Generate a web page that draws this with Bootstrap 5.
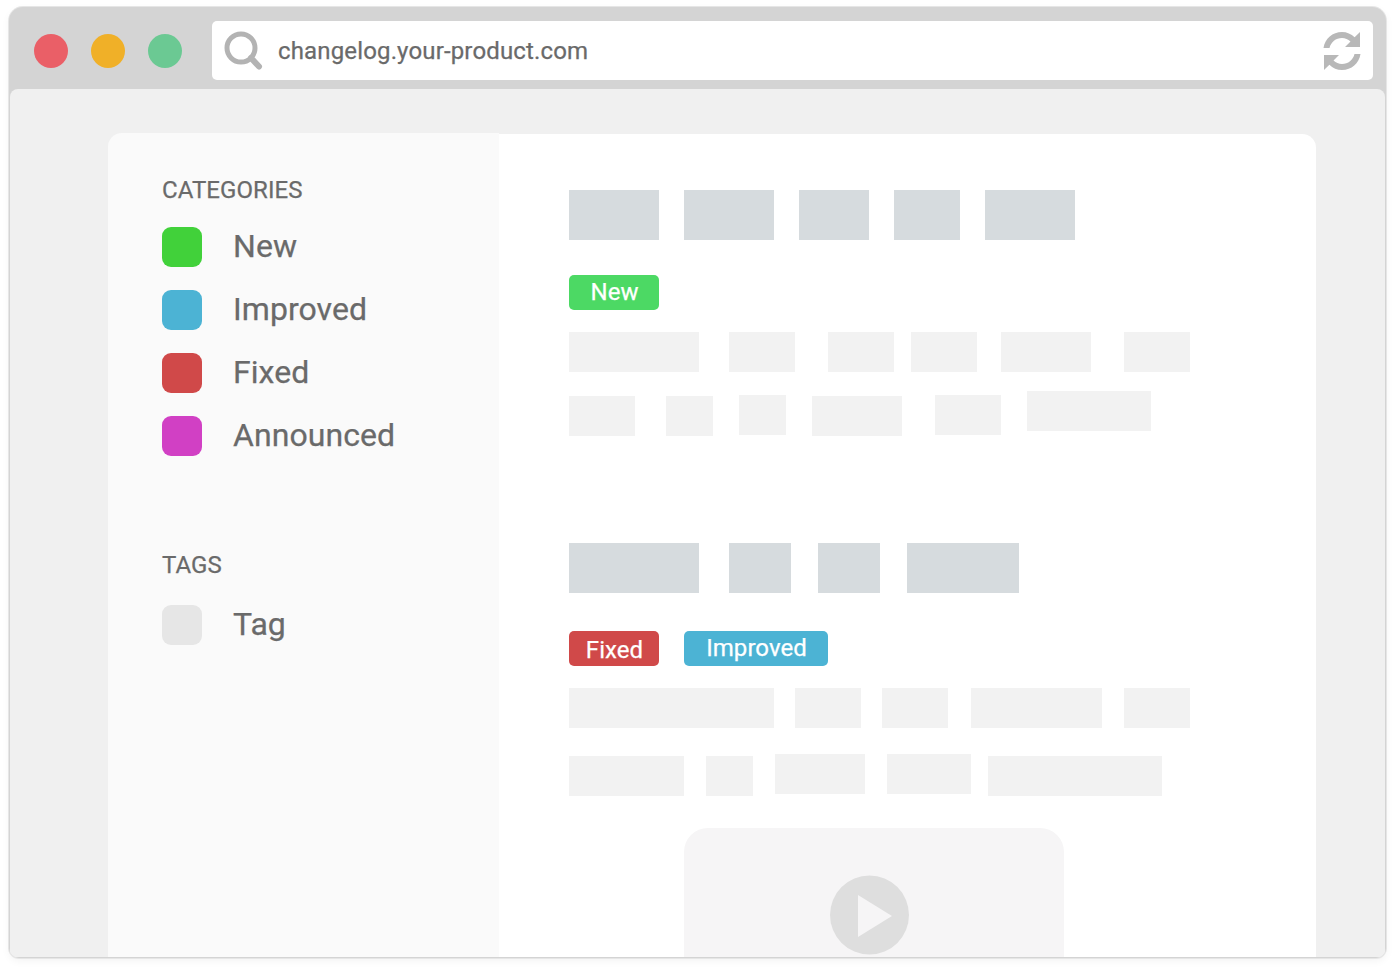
<!doctype html>
<html lang="en"><head><meta charset="utf-8"><title>Changelog</title>
<link rel="stylesheet" href="https://cdn.jsdelivr.net/npm/bootstrap@5.3.0/dist/css/bootstrap.min.css">
<style>
html,body{height:969px;overflow:hidden;background:#fff;}
body{font-family:Roboto,"Liberation Sans",sans-serif;color:#6a6a6a;padding:7px 10px 11px 9px;-webkit-text-stroke:.25px currentColor;}
.frame{height:951px;background:#d4d4d4;border-radius:14px 14px 10px 10px;box-shadow:0 0 0 1px #e6e6e6,0 3px 8px rgba(0,0,0,.05);padding:0 1px 1px;overflow:hidden;}
.topbar{height:82px;padding:14px 11px 9px 24px;}
.dot{width:34px;height:34px;border-radius:50%;flex:none;margin-right:23px;}
.dot:nth-child(3){margin-right:30px}
.d-red{background:#ea5f67}.d-amber{background:#f0b028}.d-green{background:#6bc993}
.urlbar{height:59px;width:1161px;background:#fff;border-radius:5px;padding:0 11px 0 12px;font-size:24px;letter-spacing:.15px;}
.urltext{margin-left:14px;}
.pagearea{height:868px;background:#f0f0f0;border-radius:8px 8px 0 0;padding:44px 69px 0 98px;}
.sheet{height:824px;overflow:hidden;}
.side{width:391px;background:#fafafa;padding:42px 0 0 54px;border-radius:14px 0 0 0;flex:none;}
.caption{font-size:24px;line-height:30px;letter-spacing:.08px;}
.catlist{margin-top:22px;gap:23px;}
.taglist{margin-top:25px;}
.tagshead{margin-top:94px;}
.cat{height:40px;font-size:32px;line-height:38px;letter-spacing:.06px;}
.sw{width:40px;height:40px;border-radius:9px;margin-right:31px;flex:none;}
.s-new{background:#41d13a}.s-imp,.t-imp{background:#4cb3d4}.s-fix,.t-fix{background:#d04949}.s-ann{background:#d140c4}.s-tag{background:#e6e6e6}
.t-new{background:#4cd964}
.pane{padding:56px 0 0 70px;background:#fff;margin-top:1px;border-radius:0 14px 0 0;}
.ph{background:#f2f2f2;height:40px;flex:none}
.hd{background:#d6dbde;height:50px;flex:none}
.tagpill{height:35px;border-radius:5px;color:#fff;font-size:24px;line-height:35px;text-align:center;flex:none;padding-left:1px;letter-spacing:.05px;-webkit-text-stroke:.25px #fff;}
.fixedpill{line-height:38px}
.rw{display:flex;align-items:flex-start}
.w47{width:47px}.w62{width:62px}.w66{width:66px}.w70{width:70px}.w84{width:84px}.w90{width:90px}.w112{width:112px}.w115{width:115px}.w124{width:124px}.w130{width:130px}.w131{width:131px}.w144{width:144px}.w174{width:174px}.w205{width:205px}
.l17{margin-left:17px}.l21{margin-left:21px}.l22{margin-left:22px}.l23{margin-left:23px}.l24{margin-left:24px}.l25{margin-left:25px}.l26{margin-left:26px}.l27{margin-left:27px}.l30{margin-left:30px}.l31{margin-left:31px}.l33{margin-left:33px}
.v2{margin-top:2px}.v4{margin-top:4px}.v5{margin-top:5px}
.m19{margin-top:19px}.m22{margin-top:22px}.m26{margin-top:26px}.m35{margin-top:35px}.m38{margin-top:38px}.m107{margin-top:107px}
.video{width:380px;height:140px;margin:32px 0 0 115px;background:#f6f5f6;border-radius:24px 24px 0 0;padding:47px 0 0 146px;}
.playc{width:79px;height:80px;display:block}
</style></head><body>
<div class="frame">
 <div class="topbar d-flex align-items-center">
  <div class="dot d-red"></div><div class="dot d-amber"></div><div class="dot d-green"></div>
  <div class="urlbar d-flex align-items-center">
   <svg width="40" height="40" viewBox="0 0 40 40" fill="none" stroke="#b3b3b3"><circle cx="17" cy="17" r="14" stroke-width="5"/><path d="M27 27l8 8.500" stroke-width="6" stroke-linecap="round"/></svg>
   <span class="urltext">changelog.your-product.com</span>
   <svg class="ms-auto" width="40" height="40" viewBox="0 0 40 40" fill="#b8b8b8"><path d="M38 1v15H23l5.500-5.500C26 8.300 23.300 7 20 7 13.800 7 9 11 7.500 17H1.500C3 7.500 10.500 1 20 1c4.800 0 9.300 2 12.600 5.300z"/><path d="M2 39V24h15l-5.500 5.500C14 31.700 16.700 33 20 33c6.200 0 11-4 12.500-10h6C37 32.500 29.500 39 20 39c-4.800 0-9.300-2-12.600-5.300z"/></svg>
  </div>
 </div>
 <div class="pagearea">
  <div class="sheet d-flex">
   <aside class="side">
    <div class="caption">CATEGORIES</div>
    <div class="catlist d-flex flex-column">
     <div class="cat d-flex"><span class="sw s-new"></span><span>New</span></div>
     <div class="cat d-flex"><span class="sw s-imp"></span><span>Improved</span></div>
     <div class="cat d-flex"><span class="sw s-fix"></span><span>Fixed</span></div>
     <div class="cat d-flex"><span class="sw s-ann"></span><span>Announced</span></div>
    </div>
    <div class="caption tagshead">TAGS</div>
    <div class="taglist"><div class="cat d-flex"><span class="sw s-tag"></span><span>Tag</span></div></div>
   </aside>
   <main class="pane flex-grow-1">
    <div class="rw"><div class="hd w90"></div><div class="hd w90 l25"></div><div class="hd w70 l25"></div><div class="hd w66 l25"></div><div class="hd w90 l25"></div></div>
    <div class="tagpill t-new w90 m35">New</div>
    <div class="rw m22"><div class="ph w130"></div><div class="ph w66 l30"></div><div class="ph w66 l33"></div><div class="ph w66 l17"></div><div class="ph w90 l24"></div><div class="ph w66 l33"></div></div>
    <div class="rw m19"><div class="ph w66 v5"></div><div class="ph w47 l31 v5"></div><div class="ph w47 l26 v4"></div><div class="ph w90 l26 v5"></div><div class="ph w66 l33 v4"></div><div class="ph w124 l26"></div></div>
    <div class="rw m107"><div class="hd w130"></div><div class="hd w62 l30"></div><div class="hd w62 l27"></div><div class="hd w112 l27"></div></div>
    <div class="rw m38"><div class="tagpill t-fix fixedpill w90">Fixed</div><div class="tagpill t-imp w144 l25">Improved</div></div>
    <div class="rw m22"><div class="ph w205"></div><div class="ph w66 l21"></div><div class="ph w66 l21"></div><div class="ph w131 l23"></div><div class="ph w66 l22"></div></div>
    <div class="rw m26"><div class="ph w115 v2"></div><div class="ph w47 l22 v2"></div><div class="ph w90 l22"></div><div class="ph w84 l22"></div><div class="ph w174 l17 v2"></div></div>
    <div class="video"><svg class="playc" viewBox="0 0 79 80"><circle cx="39.500" cy="40" r="39.500" fill="#dedede"/><path d="M28 20l34 21-34 21z" fill="#f6f5f6"/></svg></div>
   </main>
  </div>
 </div>
</div>
</body></html>
